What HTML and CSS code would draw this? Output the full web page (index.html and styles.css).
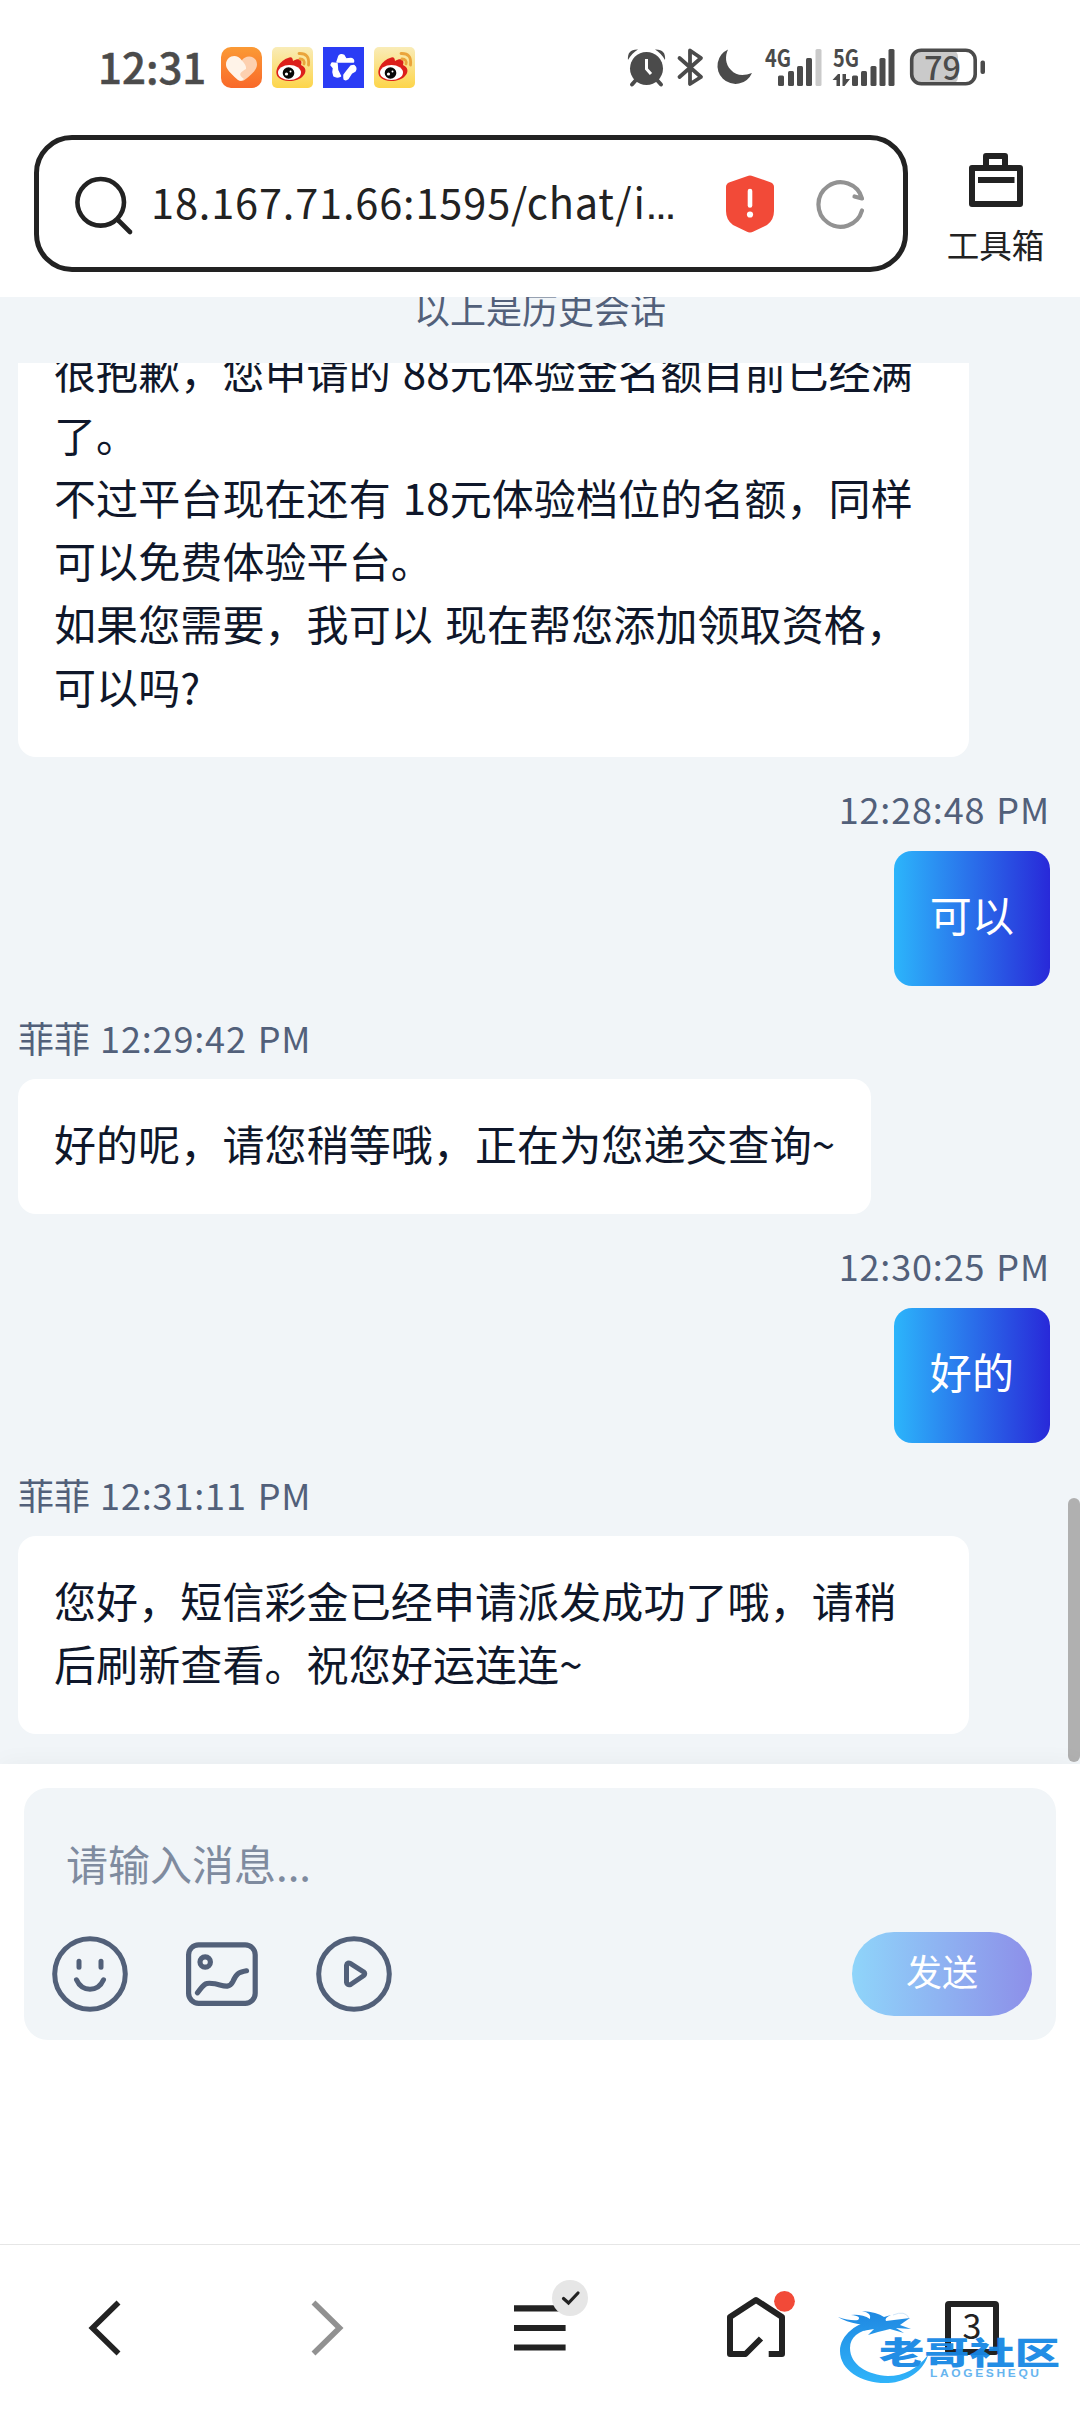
FILE: index.html
```html
<!DOCTYPE html>
<html lang="zh-CN">
<head>
<meta charset="utf-8">
<title>chat</title>
<link rel="stylesheet" href="styles.css">
</head>
<body>
<div class="screen">
  <header class="top">
    <div class="status">
      <span class="clock">12:31</span>
      <div class="apps">
        <svg width="41" height="41" viewBox="0 0 41 41">
          <defs>
            <linearGradient id="or" x1="0" y1="0" x2="0" y2="1"><stop offset="0" stop-color="#fb9a35"/><stop offset="1" stop-color="#f9692a"/></linearGradient>
          </defs>
          <rect width="41" height="41" rx="10" fill="url(#or)"/>
          <path d="M20.500 14C24 7 36 8 36 17.500C36 23 30 28 23.500 33Q20.500 35 17.500 33L8 24C10 20 16 18 20.500 14Z" fill="#fdd0b0"/>
          <path d="M20.500 13C16 6 5 8.500 5 17.500C5 21 7 24 17 33Q20 35 23 32C16 27 20 25 25 22Q26 19 20.500 13Z" fill="#fff3e8"/>
        </svg>
        <svg width="41" height="41" viewBox="0 0 41 41">
          <defs>
            <linearGradient id="ye" x1="0" y1="0" x2="0" y2="1"><stop offset="0" stop-color="#f9ecb8"/><stop offset="1" stop-color="#fdd54a"/></linearGradient>
            <g id="weibo">
              <rect width="41" height="41" rx="5" fill="url(#ye)"/>
              <path d="M16 11C21 8 21 14 21 14C26 11 31 12 29 18C34 20 35 25 31 29C26 35 11 36 6 30C1 23 9 13 16 11Z" fill="#dc1f1b"/>
              <ellipse cx="17.500" cy="25.500" rx="11.500" ry="7.500" fill="#fff"/>
              <circle cx="16.500" cy="26" r="5.800" fill="#080808"/>
              <circle cx="14.500" cy="27" r="1.600" fill="#fff"/><circle cx="18.500" cy="24.500" r="1" fill="#fff"/>
              <path d="M27 6.500Q38 6 36.500 18M28 12Q33 12 32 17" fill="none" stroke="#eaa43b" stroke-width="2.800" stroke-linecap="round"/>
            </g>
          </defs>
          <use href="#weibo"/>
        </svg>
        <svg width="41" height="41" viewBox="0 0 41 41">
          <rect width="41" height="41" fill="#2a3cf5"/>
          <g fill="#fff" stroke="#fff" stroke-width="1.500" stroke-linejoin="round">
            <path d="M14 15L16 9Q18 7 21 8.500L23 12L28 11.500Q31 12 30.500 15Z"/>
            <path d="M9 16L14 16.500L14.500 23L17.500 29Q14 31 11 29L10 25L10.500 21L8 18Z"/>
            <path d="M28 19L31 18.500Q34 21 32 24L28.500 26L25 31.500Q21 34 21 31V28L24 24Z"/>
          </g>
        </svg>
        <svg width="41" height="41" viewBox="0 0 41 41"><use href="#weibo"/></svg>
      </div>
      <svg class="signals" width="360" height="42" viewBox="626 46 360 42">
        <g fill="#4b4b4b">
          <circle cx="646.500" cy="68.500" r="16.500"/>
          <path d="M628 60Q627 49 638 49.500Q632 53 628 60ZM665 60Q666 49 655 49.500Q661 53 665 60Z"/>
          <path d="M636 80L632 84.500M657 80L661 84.500" stroke="#4b4b4b" stroke-width="4" stroke-linecap="round"/>
          <path d="M646.500 59V69L651 74" fill="none" stroke="#fff" stroke-width="3"/>
          <path d="M679.500 58L701 77L690 84V50.500L701 58L679.500 77" fill="none" stroke="#4b4b4b" stroke-width="3.800" stroke-linejoin="round" stroke-linecap="round"/>
          <path d="M728 49.500A18 18 0 1 0 752 73C744 76 736 76 731 70C725 64 725 56 728 49.500Z"/>
          <rect x="778" y="75.500" width="6" height="10.500" rx="1.500"/><rect x="788" y="71" width="6" height="15" rx="1.500"/><rect x="797" y="66" width="6" height="20" rx="1.500"/><rect x="806" y="58" width="6" height="28" rx="1.500"/>
          <rect x="815.500" y="49" width="6" height="37" rx="1.500" fill="#cacaca"/>
          <rect x="852" y="75.500" width="6" height="10.500" rx="1.500"/><rect x="861" y="71" width="6" height="15" rx="1.500"/><rect x="870.500" y="66" width="6" height="20" rx="1.500"/><rect x="879.500" y="58" width="6" height="28" rx="1.500"/><rect x="888.500" y="49" width="6" height="37" rx="1.500"/>
          <path d="M840 74V86H836.500V80H832.500L838 74ZM842.500 86V74H846V79H850L844.500 86Z"/>
          <rect x="912" y="50.500" width="46" height="33" rx="6" fill="#cacaca"/>
          <rect x="911.700" y="50.200" width="63.500" height="33.600" rx="9.500" fill="none" stroke="#4b4b4b" stroke-width="3.600"/>
          <rect x="980.500" y="60.500" width="4.500" height="13.500" rx="2"/>
        </g>
        <text class="net" x="765" y="67" textLength="26" lengthAdjust="spacingAndGlyphs">4G</text>
        <text class="net" x="833" y="67" textLength="26" lengthAdjust="spacingAndGlyphs">5G</text>
        <text class="batt" x="924" y="79.500" textLength="37" lengthAdjust="spacingAndGlyphs">79</text>
      </svg>
    </div>
    <div class="bar">
      <div class="address">
        <svg width="60" height="60" viewBox="73 174 60 60"><g fill="none" stroke="#222" stroke-width="4.600" stroke-linecap="round"><circle cx="100.700" cy="202.300" r="23.300"/><path d="M118.500 220.500L130 232"/></g></svg>
        <span class="url">18.167.71.66:1595/chat/i<span class="dots">…</span></span>
        <svg class="shield" width="48" height="58" viewBox="0 0 48 58"><path d="M21 1.200Q24 0 27 1.200L45 7.500Q48 9 48 12V36Q48 45 41 50L27.500 56.500Q24 58.500 20.500 56.500L7 50Q0 45 0 36V12Q0 9 3 7.500Z" fill="#f24a38"/><path d="M24 16V30.500" stroke="#fff" stroke-width="4.600" stroke-linecap="round"/><circle cx="24" cy="39.500" r="3.100" fill="#fff"/></svg>
        <svg class="reload" width="50" height="50" viewBox="815 179 50 50"><path d="M862 210.500A22.200 22.200 0 1 1 862 198.500L854.500 196.500" fill="none" stroke="#929292" stroke-width="4.200" stroke-linecap="round" stroke-linejoin="round"/></svg>
      </div>
      <div class="toolbox">
        <svg width="54" height="54" viewBox="0 0 54 54"><g fill="none" stroke="#222" stroke-width="6" stroke-linejoin="round"><path d="M3 15H51V51H3Z"/><path d="M17 15V3H36V15"/></g><path d="M9 27H45.500" stroke="#222" stroke-width="6"/></svg>
        <span>工具箱</span>
      </div>
    </div>
  </header>

  <main class="chat">
    <div class="history"><span>以上是历史会话</span></div>
    <div class="list">
      <div class="bubble">很抱歉，您申请的 88元体验金名额目前已经满了。<br>不过平台现在还有 18元体验档位的名额，同样可以免费体验平台。<br>如果您需要，我可以 现在帮您添加领取资格，可以吗?</div>
      <div class="meta mine"><span class="time">12:28:48 PM</span></div>
      <div class="bubble own">可以</div>
      <div class="meta">菲菲 <span class="time">12:29:42 PM</span></div>
      <div class="bubble">好的呢，请您稍等哦，正在为您递交查询~</div>
      <div class="meta mine"><span class="time">12:30:25 PM</span></div>
      <div class="bubble own">好的</div>
      <div class="meta">菲菲 <span class="time">12:31:11 PM</span></div>
      <div class="bubble">您好，短信彩金已经申请派发成功了哦，请稍后刷新查看。祝您好运连连~</div>
    </div>
    <div class="thumb"></div>
  </main>

  <section class="composer">
    <div class="panel">
      <div class="placeholder">请输入消息...</div>
      <div class="actions">
        <svg width="76" height="76" viewBox="52 1935.700 76 76"><g fill="none" stroke="#526079" stroke-width="5" stroke-linecap="round"><circle cx="90" cy="1973.700" r="35.300"/><path d="M79 1961V1967M101 1961V1967M76.500 1979.500C82 1992 98 1992 103.500 1979.500"/></g></svg>
        <svg class="pic" width="72" height="64" viewBox="186 1942.700 72 64"><g fill="none" stroke="#526079" stroke-width="5.200" stroke-linecap="round"><rect x="188.600" y="1945.500" width="66.600" height="58.500" rx="10"/><circle cx="205.200" cy="1962.700" r="5.200"/><path d="M197.500 1993.500C205 1983 206 1983 215 1984.500C223 1986 229 1990 233 1982C236 1975 238 1973 246.500 1971.500"/></g></svg>
        <svg width="76" height="76" viewBox="316 1935.700 76 76"><g fill="none" stroke="#526079" stroke-width="5" stroke-linejoin="round"><circle cx="354" cy="1973.700" r="35.300"/><path d="M346.500 1965Q347 1961.500 351 1963.500L363.500 1971.500Q366 1973.500 363.500 1975.500L351 1984Q347 1985.500 346.500 1982Z"/></g></svg>
        <div class="send">发送</div>
      </div>
    </div>
  </section>

  <nav class="nav">
    <div class="cell back"><svg width="34" height="56" viewBox="88 2300 34 56"><path d="M118.500 2302.500L92.500 2328L118.500 2353.500" fill="none" stroke="#222" stroke-width="5.600"/></svg></div>
    <div class="cell forward"><svg width="34" height="56" viewBox="310 2300 34 56"><path d="M313.500 2302.500L339.500 2328L313.500 2353.500" fill="none" stroke="#919191" stroke-width="5.600"/></svg></div>
    <div class="cell"><svg width="100" height="96" viewBox="490 2280 100 96"><path d="M514 2308.300H565.600M514 2328H565.600M514 2347.500H565.600" stroke="#222" stroke-width="6.200"/><circle cx="570" cy="2298" r="18" fill="#e6e6e6"/><path d="M563.500 2298.500L568.500 2303L578 2293" fill="none" stroke="#222" stroke-width="3.200" stroke-linecap="round"/></svg></div>
    <div class="cell"><svg width="80" height="76" viewBox="716 2290 80 76"><path d="M761 2338.500L745.500 2354H730V2317L756 2300L782 2317V2354H768.700" fill="none" stroke="#222" stroke-width="6" stroke-linejoin="round"/><circle cx="784.500" cy="2301.300" r="10.400" fill="#f24a38"/></svg></div>
    <div class="cell"><div class="tabs">3</div></div>
    <svg class="mark" width="240" height="90" viewBox="830 2300 240 90">
      <defs><linearGradient id="bl" x1="0" y1="2310" x2="0" y2="2383" gradientUnits="userSpaceOnUse"><stop offset="0" stop-color="#1482e0"/><stop offset="1" stop-color="#25b0fa"/></linearGradient></defs>
      <g fill="url(#bl)">
        <path d="M877 2319C857 2322 840 2335 840 2351C840 2371 863 2384 888 2383C908 2382 924 2370 928 2355C917 2369 904 2376 888 2376C868 2375 850 2365 850 2348C850 2337 858 2331 874 2328L884 2326Z"/>
        <path d="M838 2317Q850 2321 858 2320Q862 2316 851 2315Q862 2314 870 2319Q872 2313 862 2311Q877 2312 884 2317L891 2315Q884 2318 886 2321L910 2318Q904 2322 900 2325L911 2329L896 2328L904 2333L890 2329L878 2332L868 2335L874 2329L862 2331L874 2325L858 2324Q846 2322 838 2317Z"/>
      </g>
      <path d="M893 2315Q905 2310 909 2318" fill="none" stroke="#cfe6f9"/>
      <text class="brand" transform="translate(879 2363.500) scale(1.460 1)">老哥社区</text>
      <text class="latin" transform="translate(930 2376.500) scale(1.200 1)">LAOGESHEQU</text>
    </svg>
  </nav>
</div>
</body>
</html>
```
FILE: styles.css
```css
* { box-sizing: border-box; }
body {
  margin: 0;
  background: #fff;
  font-family: "Noto Sans CJK SC", "Noto Sans", sans-serif;
}
svg { display: block; flex: none; overflow: visible; }
.screen {
  width: 1080px;
  height: 2412px;
  display: flex;
  flex-direction: column;
  overflow: hidden;
  background: #fff;
}

.top { height: 297px; flex: none; }
.status {
  height: 135px;
  padding: 47px 94px 0 98px;
  display: flex;
  align-items: flex-start;
}
.clock {
  width: 123px;
  line-height: 38px;
  font-size: 42px;
  font-weight: 500;
  -webkit-text-stroke: .5px #4b4b4b;
  color: #4b4b4b;
}
.apps { display: flex; gap: 10px; }
.signals { margin: -1px 0 0 auto; }
.net { font-size: 24px; font-weight: 700; fill: #4b4b4b; }
.batt { font-size: 32px; font-weight: 500; fill: #4b4b4b; }

.bar { display: flex; padding-left: 34px; }
.address {
  width: 874px;
  height: 137px;
  padding: 0 38px 0 34px;
  border: 5px solid #222;
  border-radius: 38px;
  display: flex;
  align-items: center;
}
.url {
  width: 540px;
  margin: -6px 0 0 18px;
  line-height: 60px;
  font-size: 41.500px;
  letter-spacing: .850px;
  white-space: nowrap;
  color: #222;
}
.dots {
  display: inline-block;
  font-family: "Liberation Sans", sans-serif;
  line-height: 40px;
  font-size: 30px;
  font-weight: 700;
}
.shield { margin-left: 35px; }
.reload { margin-left: auto; }
.toolbox {
  width: 172px;
  padding: 18px 0 0 3px;
  display: flex;
  flex-direction: column;
  align-items: center;
  font-size: 32.500px;
  line-height: 40px;
  color: #222;
}
.toolbox span { margin-top: 17px; }

.chat {
  position: relative;
  height: 1467px;
  flex: none;
  display: flex;
  flex-direction: column;
  background: #f1f5f8;
}
.history {
  height: 66px;
  flex: none;
  overflow: hidden;
  text-align: center;
  font-size: 36px;
  line-height: 54px;
  color: #52607a;
}
.history span { display: block; margin-top: -16px; }
.list {
  flex: 1;
  min-height: 0;
  overflow: hidden;
  display: flex;
  flex-direction: column;
  justify-content: flex-end;
  align-items: flex-start;
  padding: 0 30px 30px 18px;
}
.bubble {
  flex: none;
  max-width: 951px;
  padding: 31.500px 36px 40.500px;
  border-radius: 18px;
  background: #fff;
  color: #0f172a;
  font-size: 42px;
  line-height: 63px;
  letter-spacing: .1px;
  word-spacing: 2.500px;
}
.own {
  align-self: flex-end;
  color: #fff;
  background: linear-gradient(90deg, #2cb5fb, #2829d9);
}
.meta {
  flex: none;
  height: 93.500px;
  padding-top: 24px;
  line-height: 54px;
  font-size: 36px;
  word-spacing: 2px;
  color: #52607a;
}
.time { letter-spacing: .850px; }
.mine { align-self: flex-end; }
.thumb {
  position: absolute;
  right: 0;
  bottom: 2px;
  width: 12px;
  height: 264px;
  border-radius: 6px;
  background: #b0b0b0;
}

.composer {
  position: relative;
  height: 480px;
  flex: none;
  padding: 24px;
  background: #fff;
  box-shadow: 0 0 24px rgba(0, 0, 0, .045);
}
.panel {
  height: 252px;
  padding: 43px 24px 24px 28px;
  border-radius: 24px;
  background: #f1f5f8;
}
.placeholder {
  height: 101px;
  padding-left: 14px;
  line-height: 63px;
  font-size: 42px;
  color: #7f8b9f;
}
.actions { height: 84px; display: flex; align-items: center; }
.pic { margin: 0 58px; }
.send {
  width: 180px;
  height: 84px;
  margin-left: auto;
  border-radius: 42px;
  text-align: center;
  line-height: 77px;
  font-size: 36px;
  color: #fff;
  background: linear-gradient(90deg, #8fd5fa, #8d8fe9);
}

.nav {
  position: relative;
  height: 168px;
  flex: none;
  display: grid;
  grid-template-columns: repeat(5, 216px);
  border-top: 1px solid #e6e6e6;
  background: #fff;
}
.cell {
  display: flex;
  align-items: center;
  justify-content: center;
  padding-bottom: 1px;
}
.back { padding-right: 6px; }
.forward { padding-left: 6px; }
.tabs {
  width: 54px;
  height: 54px;
  border: 6px solid #222;
  border-radius: 4px;
  text-align: center;
  font-size: 34px;
  line-height: 36px;
  color: #222;
}
.mark { position: absolute; left: 830px; top: 55px; opacity: .95; }
.brand { font-size: 31px; font-weight: 900; fill: #1787e4; }
.latin {
  font-family: "Liberation Sans", sans-serif;
  font-size: 10px;
  font-weight: 700;
  letter-spacing: 2.200px;
  fill: #5fb2ef;
}
```
